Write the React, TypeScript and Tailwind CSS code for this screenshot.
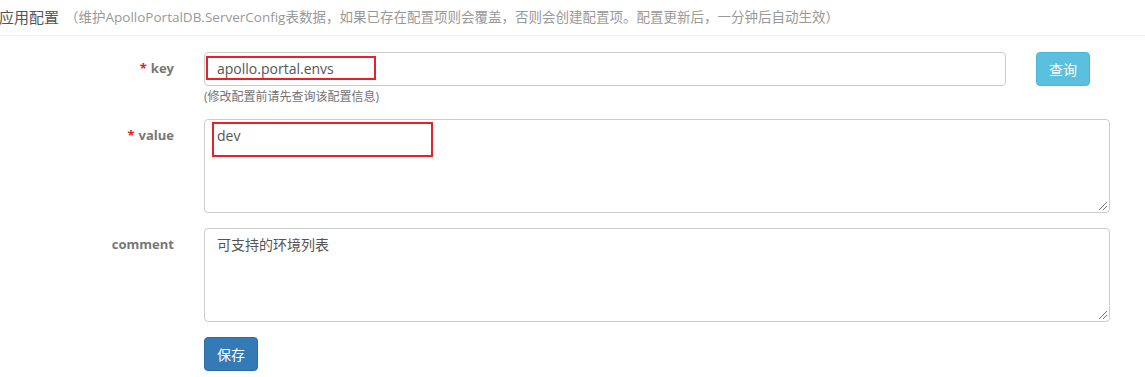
import React from "react";

const font = { fontFamily: '"Open Sans", "Noto Sans CJK SC", sans-serif' };

function Label({ text, required }: { text: string; required?: boolean }) {
  return (
    <div className="w-[174px] shrink-0 text-right text-[13px] font-bold text-[#777] pt-[6px] leading-[20px]">
      {required && <span className="text-[#e02020] mr-[4px]">*</span>}
      {text}
    </div>
  );
}

export default function App() {
  return (
    <div className="w-[1145px] h-[377px] bg-white overflow-hidden" style={font}>
      <div className="h-[36px] border-b border-[#eef0f3] flex items-center">
        <span className="text-[15px] text-[#555] ml-[-1px]">应用配置</span>
        <span className="text-[13.5px] text-[#999] ml-[6px]">（维护ApolloPortalDB.ServerConfig表数据，如果已存在配置项则会覆盖，否则会创建配置项。配置更新后，一分钟后自动生效）</span>
      </div>

      <div className="pt-[16px] flex flex-col">
        <div className="flex">
          <Label text="key" required />
          <div className="ml-[30px] w-[802px]">
            <div className="relative h-[34px] border border-[#ccc] rounded-[4px] px-[12px] flex items-center text-[14px] text-[#555]">
              <span className="mt-[-2px]">apollo.portal.envs</span>
              <div className="absolute left-[1px] top-[3px] w-[170px] h-[24px] border-2 border-[#e8202a]" />
            </div>
            <div className="text-[12px] text-[#737373] mt-[2px] leading-[17px]">(修改配置前请先查询该配置信息)</div>
          </div>
          <button className="ml-[30px] w-[54px] h-[34px] rounded-[4px] bg-[#5bc0de] border border-[#46b8da] text-white text-[14px]">查询</button>
        </div>

        <div className="flex mt-[14px]">
          <Label text="value" required />
          <div className="ml-[30px] relative w-[906px] h-[94px] border border-[#ccc] rounded-[4px] px-[12px] pt-[6px] text-[14px] text-[#555] leading-[20px]">
            dev
            <div className="absolute left-[7px] top-[2px] w-[221px] h-[35px] border-2 border-[#e8202a]" />
            <Grip />
          </div>
        </div>

        <div className="flex mt-[15px]">
          <Label text="comment" />
          <div className="ml-[30px] relative w-[906px] h-[94px] border border-[#ccc] rounded-[4px] px-[12px] pt-[6px] text-[14px] text-[#555] leading-[20px]">
            可支持的环境列表
            <Grip />
          </div>
        </div>

        <div className="flex mt-[15px]">
          <div className="w-[204px] shrink-0" />
          <button className="w-[54px] h-[34px] rounded-[4px] bg-[#337ab7] border border-[#2e6da4] text-white text-[14px]">保存</button>
        </div>
      </div>
    </div>
  );
}

function Grip() {
  return (
    <svg className="absolute right-[1px] bottom-[1px]" width="10" height="10" viewBox="0 0 10 10">
      <line x1="9" y1="1" x2="1" y2="9" stroke="#777" strokeWidth="1" />
      <line x1="9" y1="5" x2="5" y2="9" stroke="#777" strokeWidth="1" />
    </svg>
  );
}
